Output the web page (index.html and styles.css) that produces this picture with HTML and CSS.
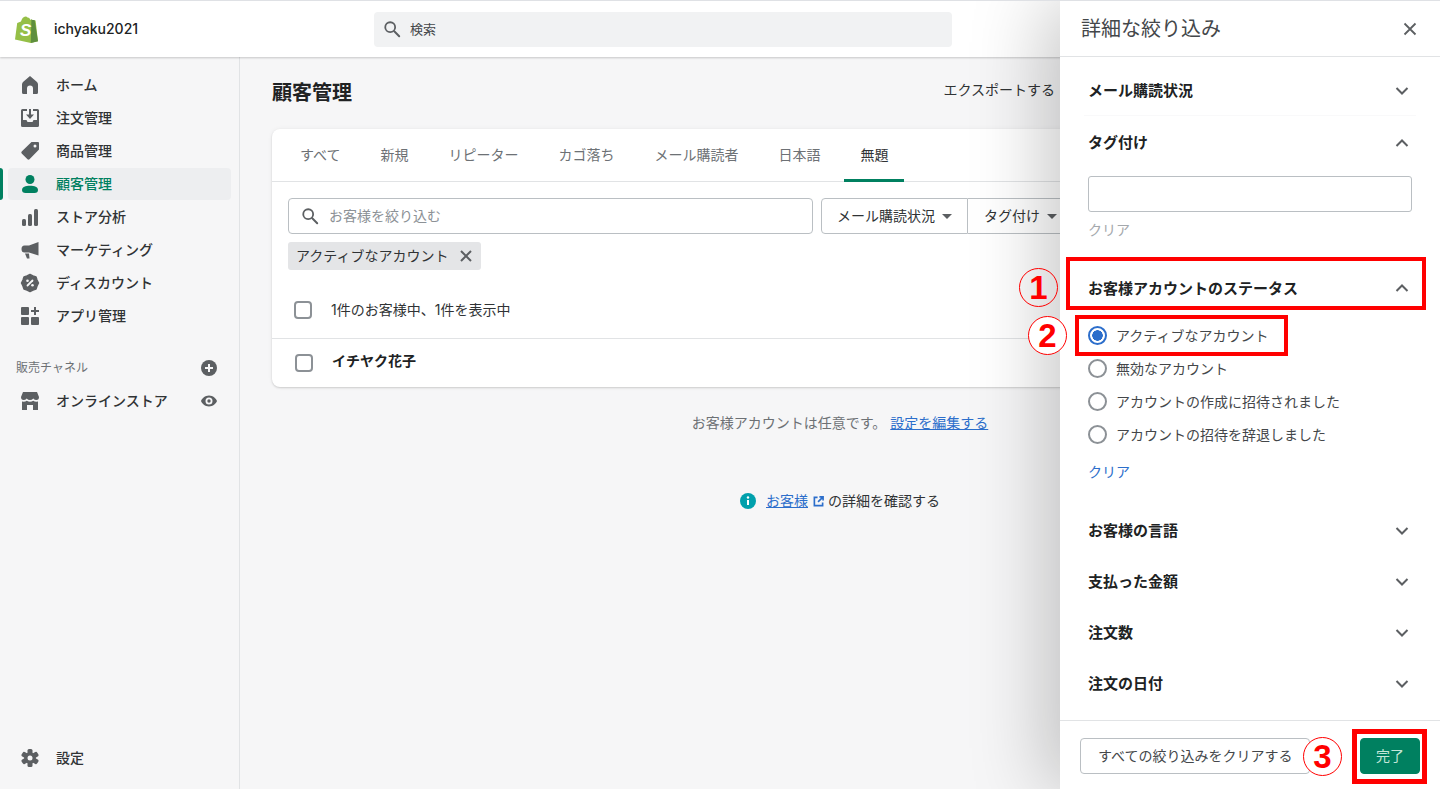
FILE: index.html
```html
<!DOCTYPE html>
<html lang="ja">
<head>
    <meta charset="UTF-8">
    <meta name="viewport" content="width=device-width, initial-scale=1.0">
    <title>顧客管理</title>
    <link rel="stylesheet" href="styles.css">
</head>
<body>
    <div class="app">
        <!-- Top bar -->
        <header class="topbar">
            <div class="store">
                <svg class="store-logo" viewBox="0 0 24 27" width="24" height="27">
                    <path fill="#95bf47" d="M1 23.5 3.2 7 7 5.6C7.6 3 9.300 .6 11.600 .5c.9 0 1.500.4 1.900 1 1.200-.2 2.200.6 2.700 2.300l1.600-.4 1 .9 2.800.2L24 25.200 16.800 27z"/>
                    <path fill="#5e8e3e" d="M17.400 3.300 16.800 27 24 25.200 20.700 4.400c-.1-.3-.3-.400-.5-.4l-1.800-.1z"/>
                    <text class="logo-letter" x="6" y="20">S</text>
                </svg>
                <span class="store-name">ichyaku2021</span>
            </div>
            <div class="global-search">
                <svg class="icon" viewBox="0 0 20 20"><circle cx="8" cy="8" r="5.500" fill="none" stroke="#5c5f62" stroke-width="2"/><path d="M12.500 12.500 18 18" stroke="#5c5f62" stroke-width="2.200" stroke-linecap="round"/></svg>
                <span>検索</span>
            </div>
        </header>

        <div class="layout">
            <!-- Sidebar -->
            <nav class="sidebar">
                <a class="nav-item">
                    <svg class="icon" viewBox="0 0 20 20"><path d="M10 1 3 7Q2 8 2 9.500V17.500Q2 19 3.500 19H7V13.500A3 3 0 0 1 13 13.500V19H16.500Q18 19 18 17.500V9.500Q18 8 17 7Z"/></svg>
                    ホーム
                </a>
                <a class="nav-item">
                    <svg class="icon" viewBox="0 0 20 20"><path d="M1 2.500Q1 1 2.500 1H7V3H3V12H6.500L7.500 14H12.500L13.500 12H17V3H13V1H17.500Q19 1 19 2.500V17.500Q19 19 17.500 19H2.500Q1 19 1 17.500Z"/><path d="M9 1H11V6.500H14L10 11 6 6.500H9Z"/></svg>
                    注文管理
                </a>
                <a class="nav-item">
                    <svg class="icon" viewBox="0 0 20 20"><path fill-rule="evenodd" d="M18 1H11.500L1.700 10.500Q.8 11.500 1.700 12.500L7.500 18.300Q8.500 19.200 9.500 18.300L19 8.500V2Q19 1 18 1ZM15 3.500A1.500 1.500 0 1 1 15 6.500 1.500 1.500 0 0 1 15 3.500Z"/></svg>
                    商品管理
                </a>
                <a class="nav-item active">
                    <svg class="icon" viewBox="0 0 20 20"><circle cx="10" cy="5.500" r="4.500"/><path d="M2 16C2 13 5.500 11.800 10 11.800S18 13 18 16Q18 19 14.500 19H5.500Q2 19 2 16Z"/></svg>
                    顧客管理
                </a>
                <a class="nav-item">
                    <svg class="icon" viewBox="0 0 20 20"><rect x="2" y="12" width="4" height="7" rx="1.500"/><rect x="8" y="7" width="4" height="12" rx="1.500"/><rect x="14" y="2" width="4" height="17" rx="1.500"/></svg>
                    ストア分析
                </a>
                <a class="nav-item">
                    <svg class="icon" viewBox="0 0 20 20"><path d="M18.500 2V15.500L9 12.500H4.500Q1.500 12.500 1.500 9T4.500 5.500H9Z"/><path d="M5 13.500H9L9.500 18.500H7Z"/></svg>
                    マーケティング
                </a>
                <a class="nav-item">
                    <svg class="icon" viewBox="0 0 20 20"><polygon points="10,1.500 13,3 16,4 17,7 18.500,10 17,13 16,16 13,17 10,18.500 7,17 4,16 3,13 1.500,10 3,7 4,4 7,3" stroke="#5c5f62" stroke-width="1.500" stroke-linejoin="round"/><path d="M12.500 7.500 7.500 12.500" stroke="#f6f6f7" stroke-width="1.800" stroke-linecap="round"/><circle cx="7.500" cy="7.800" r="1.300" fill="#f6f6f7"/><circle cx="12.500" cy="12.200" r="1.300" fill="#f6f6f7"/></svg>
                    ディスカウント
                </a>
                <a class="nav-item">
                    <svg class="icon" viewBox="0 0 20 20"><rect x="1" y="1" width="8" height="8" rx="1"/><rect x="1" y="11" width="8" height="8" rx="1"/><rect x="11" y="11" width="8" height="8" rx="1"/><path d="M14 1H16V4H19V6H16V9H14V6H11V4H14Z"/></svg>
                    アプリ管理
                </a>

                <div class="nav-label">
                    <span>販売チャネル</span>
                    <svg class="icon-small" viewBox="0 0 16 16"><circle cx="8" cy="8" r="8"/><path d="M8 4V12M4 8H12" stroke="#f6f6f7" stroke-width="2"/></svg>
                </div>
                <a class="nav-item">
                    <svg class="icon" viewBox="0 0 20 20"><path d="M3 1H17L19 6Q19 9 16.500 9 14.500 9 13.300 7.500 12 9 10 9T6.700 7.500Q5.500 9 3.500 9 1 9 1 6Z"/><path d="M2 10.500Q5 11 6.700 9.800 10 11.500 13.300 9.800 15 11 18 10.500V19H13V14H7V19H2Z"/></svg>
                    オンラインストア
                    <svg class="icon-small nav-eye" viewBox="0 0 16 16"><path fill-rule="evenodd" d="M8 2.500C12 2.500 15 5.500 16 8 15 10.500 12 13.500 8 13.500S1 10.500 0 8C1 5.500 4 2.500 8 2.500ZM8 4.500A3.500 3.500 0 1 0 8 11.500 3.500 3.500 0 0 0 8 4.500Z"/><circle cx="8" cy="8" r="1.700"/></svg>
                </a>

                <a class="nav-item nav-settings">
                    <svg class="icon" viewBox="0 0 20 20">
                        <g>
                            <rect x="7.500" y="1" width="5" height="18" rx="1.500"/>
                            <rect x="7.500" y="1" width="5" height="18" rx="1.500" transform="rotate(60 10 10)"/>
                            <rect x="7.500" y="1" width="5" height="18" rx="1.500" transform="rotate(120 10 10)"/>
                        </g>
                        <circle cx="10" cy="10" r="5.800"/>
                        <circle cx="10" cy="10" r="2.500" fill="#f6f6f7"/>
                    </svg>
                    設定
                </a>
            </nav>

            <!-- Customers page -->
            <main class="content">
                <div class="page-header">
                    <h1>顧客管理</h1>
                    <span class="page-action">エクスポートする</span>
                </div>

                <section class="card">
                    <ul class="tabs">
                        <li>すべて</li>
                        <li>新規</li>
                        <li>リピーター</li>
                        <li>カゴ落ち</li>
                        <li>メール購読者</li>
                        <li>日本語</li>
                        <li class="selected">無題</li>
                    </ul>

                    <div class="filter-bar">
                        <div class="filter-search">
                            <svg class="icon" viewBox="0 0 20 20"><circle cx="8" cy="8" r="5.500" fill="none" stroke="#5c5f62" stroke-width="2"/><path d="M12.500 12.500 18 18" stroke="#5c5f62" stroke-width="2.200" stroke-linecap="round"/></svg>
                            <span>お客様を絞り込む</span>
                        </div>
                        <div class="filter-buttons">
                            <button class="filter-button">メール購読状況<i class="caret"></i></button>
                            <button class="filter-button">タグ付け<i class="caret"></i></button>
                        </div>
                    </div>

                    <div class="chips">
                        <span class="chip">アクティブなアカウント
                            <svg viewBox="0 0 14 14" width="14" height="14"><path d="M2 2 12 12M12 2 2 12" stroke="#5c5f62" stroke-width="2"/></svg>
                        </span>
                    </div>

                    <div class="list-head">
                        <input type="checkbox" class="check">
                        <span>1件のお客様中、1件を表示中</span>
                    </div>
                    <div class="list-row">
                        <input type="checkbox" class="check">
                        <strong>イチヤク花子</strong>
                    </div>
                </section>

                <p class="note">お客様アカウントは任意です。 <a>設定を編集する</a></p>
                <p class="learn-more">
                    <svg viewBox="0 0 16 16" width="16" height="16"><circle cx="8" cy="8" r="8" fill="#00a0ac"/><circle cx="8" cy="4.500" r="1.200" fill="#fff"/><rect x="7" y="7" width="2" height="5" fill="#fff"/></svg>
                    <a>お客様</a>
                    <svg viewBox="0 0 12 12" width="11" height="11"><path d="M5 1.500H1.500V10.500H10.500V7M7 1H11V5M11 1 5.500 6.500" fill="none" stroke="#2c6ecb" stroke-width="1.800"/></svg>
                    <span>の詳細を確認する</span>
                </p>
            </main>
        </div>

        <!-- Filter panel -->
        <aside class="panel">
            <div class="panel-header">
                <h2>詳細な絞り込み</h2>
                <svg viewBox="0 0 14 14" width="14" height="14"><path d="M1.500 1.500 12.500 12.500M12.500 1.500 1.500 12.500" stroke="#5c5f62" stroke-width="1.800"/></svg>
            </div>

            <div class="panel-body">
                <div class="filter-row first">
                    <span>メール購読状況</span>
                    <svg class="chevron down" viewBox="0 0 14 8"><path d="M1.500 1 7 6.500 12.500 1"/></svg>
                </div>

                <div class="filter-row tag-row">
                    <span>タグ付け</span>
                    <svg class="chevron" viewBox="0 0 14 8"><path d="M1.500 7 7 1.500 12.500 7"/></svg>
                </div>
                <div class="filter-body tags">
                    <input type="text" class="text-input">
                    <span class="clear disabled">クリア</span>
                </div>

                <div class="filter-row">
                    <span>お客様アカウントのステータス</span>
                    <svg class="chevron" viewBox="0 0 14 8"><path d="M1.500 7 7 1.500 12.500 7"/></svg>
                </div>
                <div class="filter-body status">
                    <label class="radio-row"><input type="radio" name="status" checked>アクティブなアカウント</label>
                    <label class="radio-row"><input type="radio" name="status">無効なアカウント</label>
                    <label class="radio-row"><input type="radio" name="status">アカウントの作成に招待されました</label>
                    <label class="radio-row"><input type="radio" name="status">アカウントの招待を辞退しました</label>
                    <span class="clear">クリア</span>
                </div>

                <div class="filter-row">
                    <span>お客様の言語</span>
                    <svg class="chevron down" viewBox="0 0 14 8"><path d="M1.500 1 7 6.500 12.500 1"/></svg>
                </div>
                <div class="filter-row">
                    <span>支払った金額</span>
                    <svg class="chevron down" viewBox="0 0 14 8"><path d="M1.500 1 7 6.500 12.500 1"/></svg>
                </div>
                <div class="filter-row">
                    <span>注文数</span>
                    <svg class="chevron down" viewBox="0 0 14 8"><path d="M1.500 1 7 6.500 12.500 1"/></svg>
                </div>
                <div class="filter-row">
                    <span>注文の日付</span>
                    <svg class="chevron down" viewBox="0 0 14 8"><path d="M1.500 1 7 6.500 12.500 1"/></svg>
                </div>
            </div>

            <div class="panel-footer">
                <button class="btn">すべての絞り込みをクリアする</button>
                <button class="btn btn-primary">完了</button>
            </div>
        </aside>

        <!-- Red annotations -->
        <div class="mark-box box-1"></div>
        <div class="mark-box box-2"></div>
        <div class="mark-box box-3"></div>
        <span class="mark-number number-1">1</span>
        <span class="mark-number number-2">2</span>
        <span class="mark-number number-3">3</span>
    </div>
</body>
</html>
```

FILE: styles.css
```css
/* Basic Reset */
* {
    margin: 0;
    padding: 0;
    box-sizing: border-box;
}

html, body {
    height: 100%;
    overflow: hidden;
}

body {
    font-family: Inter, "Noto Sans CJK JP", sans-serif;
    font-size: 14px;
    line-height: 20px;
    color: #202223;
    background-color: #f6f6f7;
    border-top: 1px solid #dfe1e5;
}

.app {
    position: relative;
    height: 788px;
    display: flex;
    flex-direction: column;
}

svg {
    flex-shrink: 0;
}

.icon {
    width: 20px;
    height: 20px;
    fill: #5c5f62;
}

.icon-small {
    width: 16px;
    height: 16px;
    fill: #5c5f62;
}

/* Top bar */
.topbar {
    height: 56px;
    display: flex;
    align-items: center;
    background-color: #fff;
    box-shadow: 0 1px 2px rgba(0, 0, 0, 0.2);
    position: relative;
    z-index: 1;
}

.store {
    width: 374px;
    padding-left: 14px;
    display: flex;
    align-items: center;
    gap: 16px;
}

.logo-letter {
    font-family: "Liberation Sans", sans-serif;
    font-size: 17px;
    font-weight: 700;
    font-style: italic;
    fill: #fff;
}

.store-name {
    font-size: 14px;
    font-weight: 500;
}

.global-search {
    width: 578px;
    height: 35px;
    padding-left: 9px;
    display: flex;
    align-items: center;
    gap: 9px;
    background-color: #f1f2f3;
    border-radius: 4px;
    font-size: 13px;
    color: #44474a;
}

.global-search .icon {
    width: 18px;
    height: 18px;
}

.layout {
    flex: 1;
    display: flex;
    min-height: 0;
}

/* Sidebar */
.sidebar {
    width: 240px;
    flex-shrink: 0;
    padding: 12px 8px 15px;
    display: flex;
    flex-direction: column;
    gap: 1px;
    border-right: 1px solid #e1e3e5;
}

.nav-item {
    position: relative;
    height: 32px;
    padding: 0 14px 0 12px;
    display: flex;
    align-items: center;
    gap: 16px;
    border-radius: 4px;
    font-weight: 500;
    color: #303335;
}

.nav-item.active {
    background-color: #edeef0;
    color: #008060;
}

.nav-item.active .icon {
    fill: #008060;
}

.nav-item.active::before {
    content: "";
    position: absolute;
    left: -8px;
    top: 0;
    width: 3px;
    height: 32px;
    background-color: #008060;
    border-radius: 0 3px 3px 0;
}

.nav-eye {
    margin-left: auto;
}

.nav-settings {
    margin-top: auto;
}

.nav-label {
    height: 32px;
    margin-top: 19px;
    padding: 0 14px 0 8px;
    display: flex;
    align-items: center;
    justify-content: space-between;
    font-size: 12px;
    color: #6d7175;
}

/* Customers page */
.content {
    flex: 1;
    min-width: 0;
    padding: 20px 32px 0;
    display: flex;
    flex-direction: column;
    align-items: center;
}

.page-header {
    width: 100%;
    height: 32px;
    margin-bottom: 20px;
    padding-right: 353px;
    display: flex;
    align-items: center;
    justify-content: space-between;
}

.page-header h1 {
    font-size: 20px;
    font-weight: 600;
}

.page-action {
    margin-bottom: 6px;
    color: #303335;
}

.card {
    width: 100%;
    background-color: #fff;
    border-radius: 8px;
    box-shadow: 0 0 5px rgba(23, 24, 24, 0.05), 0 1px 2px rgba(0, 0, 0, 0.15);
}

.tabs {
    height: 53px;
    padding-left: 8px;
    display: flex;
    list-style-type: none;
    border-bottom: 1px solid #e1e3e5;
}

.tabs li {
    margin: 0 4px;
    padding: 2px 16px 0;
    display: flex;
    align-items: center;
    color: #6d7175;
    border-bottom: 3px solid transparent;
    height: 53px;
}

.tabs li.selected {
    color: #303335;
    border-bottom-color: #008060;
}

.filter-bar {
    padding: 16px 16px 0;
    display: flex;
    gap: 8px;
}

.filter-search {
    flex: 0 0 525px;
    height: 36px;
    padding-left: 12px;
    display: flex;
    align-items: center;
    gap: 10px;
    border: 1px solid #babfc3;
    border-radius: 4px;
    color: #8c9196;
}

.filter-search .icon {
    width: 18px;
    height: 18px;
}

.filter-buttons {
    display: flex;
}

.filter-button {
    height: 36px;
    padding: 0 15px;
    display: flex;
    align-items: center;
    gap: 7px;
    font: inherit;
    color: #303335;
    background-color: #fff;
    border: 1px solid #babfc3;
    border-radius: 4px 0 0 4px;
}

.filter-button + .filter-button {
    padding-left: 16px;
    border-left: 0;
    border-radius: 0;
}

.caret {
    width: 0;
    height: 0;
    border-left: 5px solid transparent;
    border-right: 5px solid transparent;
    border-top: 5px solid #5c5f62;
}

.chips {
    padding: 8px 16px 0;
    display: flex;
}

.chip {
    height: 28px;
    padding: 0 8px;
    display: flex;
    align-items: center;
    gap: 11px;
    background-color: #e4e5e7;
    border-radius: 3px;
    color: #303335;
}

.check {
    appearance: none;
    width: 18px;
    height: 18px;
    background-color: #fff;
    border: 2px solid #8c9196;
    border-radius: 4px;
}

.list-head {
    height: 57px;
    margin-top: 12px;
    padding-left: 22px;
    display: flex;
    align-items: center;
    gap: 19px;
    color: #303335;
    border-bottom: 1px solid #e1e3e5;
}

.list-row {
    height: 48px;
    padding-left: 23px;
    display: flex;
    align-items: center;
    gap: 19px;
}

.list-row strong {
    padding-bottom: 4px;
    font-weight: 700;
}

.note {
    margin-top: 26px;
    color: #6d7175;
}

.note a,
.learn-more a {
    color: #2c6ecb;
    text-decoration: underline;
}

.learn-more {
    margin-top: 58px;
    height: 20px;
    display: flex;
    align-items: center;
    gap: 5px;
    color: #303335;
}

.learn-more a {
    margin-left: 5px;
}

.learn-more span {
    margin-left: -1px;
}

/* Filter panel */
.panel {
    position: absolute;
    top: 0;
    right: 0;
    bottom: 0;
    width: 380px;
    z-index: 2;
    display: flex;
    flex-direction: column;
    background-color: #fff;
    box-shadow: -15px 0 70px rgba(0, 0, 0, 0.22);
}

.panel-header {
    height: 56px;
    padding: 0 23px 0 21px;
    display: flex;
    align-items: center;
    justify-content: space-between;
    border-bottom: 1px solid #e1e3e5;
}

.panel-header h2 {
    font-size: 20px;
    font-weight: 400;
    color: #44474a;
}

.panel-body {
    flex: 1;
    padding: 8px 24px 0;
}

.filter-row {
    height: 51px;
    padding: 0 7px 0 4px;
    display: flex;
    align-items: center;
    justify-content: space-between;
    font-size: 15px;
    font-weight: 700;
}

.filter-row span {
    padding-top: 2px;
}

.filter-row.first {
    margin-bottom: 1px;
    border-bottom: 1px solid #f9f9fa;
}

.filter-row.tag-row span {
    padding-top: 0;
}

.chevron {
    width: 14px;
    height: 8px;
    fill: none;
    stroke: #5c5f62;
    stroke-width: 2;
}

.chevron.down {
    margin-top: 2px;
}

.filter-body {
    padding: 0 4px;
    display: flex;
    flex-direction: column;
    align-items: flex-start;
}

.filter-body.tags {
    height: 94px;
    padding-top: 8px;
}

.filter-body.status {
    height: 191px;
    padding-top: 6px;
}

.text-input {
    width: 100%;
    height: 36px;
    border: 1px solid #babfc3;
    border-radius: 3px;
}

.clear {
    color: #2c6ecb;
}

.tags .clear {
    margin-top: 8px;
}

.status .clear {
    margin-top: 11px;
}

.clear.disabled {
    color: #a4a8ac;
}

.radio-row {
    height: 33px;
    display: flex;
    align-items: center;
    gap: 9px;
    color: #44474a;
}

.radio-row input {
    appearance: none;
    width: 19px;
    height: 19px;
    background-color: #fff;
    border: 2px solid #8c9196;
    border-radius: 50%;
}

.radio-row input:checked {
    border-color: #2c6ecb;
    background: radial-gradient(circle, #2c6ecb 0 5px, #fff 5.5px);
}

.panel-footer {
    height: 69px;
    padding: 17px 20px 0;
    display: flex;
    align-items: flex-start;
    justify-content: space-between;
    border-top: 1px solid #e1e3e5;
}

.btn {
    height: 36px;
    padding: 0 17px;
    font: inherit;
    color: #44474a;
    background-color: #fff;
    border: 1px solid #babfc3;
    border-radius: 4px;
}

.btn-primary {
    width: 60px;
    padding: 0;
    color: #c4e6d8;
    background-color: #008060;
    border-color: #008060;
}

/* Red annotations */
.mark-box {
    position: absolute;
    z-index: 3;
    border: 4px solid #f00;
}

.box-1 {
    left: 1066px;
    top: 256px;
    width: 360px;
    height: 53px;
}

.box-2 {
    left: 1075px;
    top: 314px;
    width: 213px;
    height: 41px;
}

.box-3 {
    left: 1352px;
    top: 728px;
    width: 75px;
    height: 55px;
    border-width: 5px;
}

.mark-number {
    position: absolute;
    z-index: 3;
    width: 39px;
    height: 39px;
    display: flex;
    align-items: center;
    justify-content: center;
    font-family: "Liberation Sans", sans-serif;
    font-size: 33px;
    font-weight: 700;
    color: #f00;
    background-color: #fff;
    border: 1.5px solid #f00;
    border-radius: 50%;
}

.number-1 {
    left: 1019px;
    top: 267px;
    background-color: transparent;
}

.number-2 {
    left: 1028px;
    top: 315px;
}

.number-3 {
    left: 1303px;
    top: 736px;
}
```
